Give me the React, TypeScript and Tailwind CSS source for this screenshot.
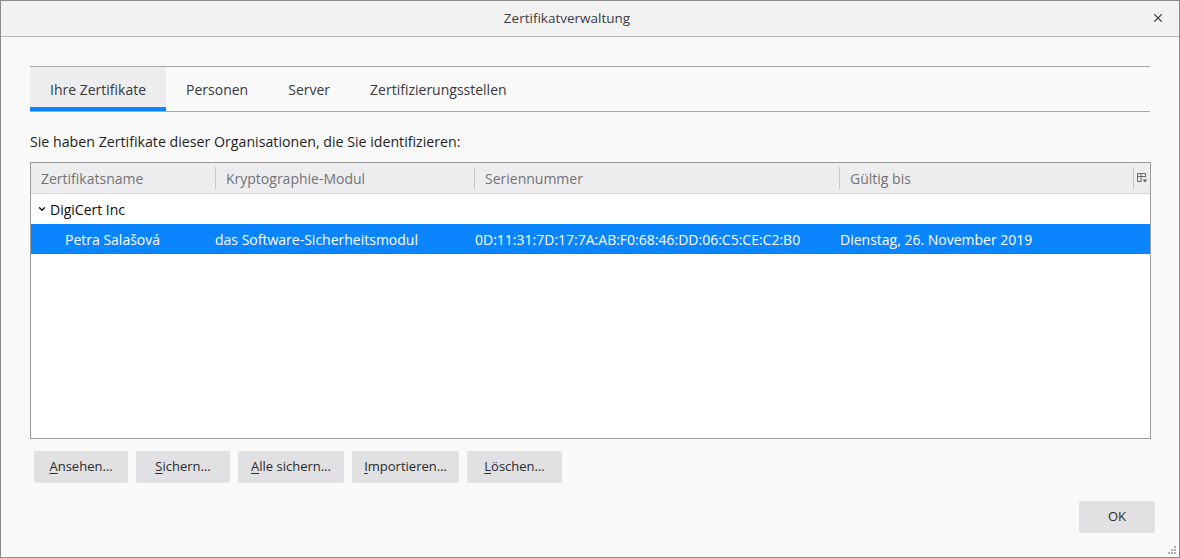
import { ChevronDown, X } from "lucide-react";

const tabs = ["Ihre Zertifikate", "Personen", "Server", "Zertifizierungsstellen"];

const columns = [
  { label: "Zertifikatsname", w: "w-[184px]" },
  { label: "Kryptographie-Modul", w: "w-[259px]" },
  { label: "Seriennummer", w: "w-[365px]" },
  { label: "Gültig bis", w: "flex-1" },
];

const buttons = [
  { key: "A", rest: "nsehen…", w: "w-[94px]" },
  { key: "S", rest: "ichern…", w: "w-[94px]" },
  { key: "A", rest: "lle sichern…", w: "w-[106px]" },
  { key: "I", rest: "mportieren…", w: "w-[107px]" },
  { key: "L", rest: "öschen…", w: "w-[95px]" },
];

function ColumnPicker() {
  return (
    <svg width="12" height="12" viewBox="0 0 12 12" className="text-[#6a6a6f]">
      <path d="M1.5 1.5h8v4M1.5 1.5v8h4M1.5 4.5h8M5 1.5v8" fill="none" stroke="currentColor" strokeWidth="1" />
      <path d="M6.5 7.5h5l-2.5 3z" fill="currentColor" />
    </svg>
  );
}

export default function App() {
  return (
    <div
      className="w-[1180px] h-[558px] flex flex-col bg-[#f9f9fa] border border-[#8a8a8a] text-[#0c0c0d] overflow-hidden"
      style={{ fontFamily: '"Open Sans", "Noto Sans", sans-serif' }}
    >
      {/* Title bar */}
      <div className="relative h-[36px] shrink-0 flex items-center justify-center pr-[46px] bg-[#f2f2f2] border-b border-[#b5b5b5]">
        <span className="text-[13.5px] text-[#3b3b45]">Zertifikatverwaltung</span>
        <button className="absolute right-[14px] top-[10px] text-[#4a4a4f]">
          <X className="w-[14px] h-[14px]" strokeWidth={2} />
        </button>
      </div>

      <div className="flex-1 flex flex-col px-[29px] pt-[29px]">
        {/* Tabs */}
        <div className="flex h-[46px] border-t border-b border-[#a8a8a8] w-[1120px]">
          {tabs.map((t, i) => (
            <div
              key={t}
              className={`flex items-center px-[20px] text-[14px] text-[#38383d] ${
                i === 0 ? "bg-[#ededf0] border-b-[4px] border-[#0a84ff] pt-[4px]" : ""
              }`}
            >
              {t}
            </div>
          ))}
        </div>

        <p className="mt-[19px] text-[14.2px] leading-[22px] text-[#1f1f22]">
          Sie haben Zertifikate dieser Organisationen, die Sie identifizieren:
        </p>

        {/* Tree */}
        <div className="mt-[9px] w-[1121px] h-[277px] border border-[#9b9b9b] bg-white flex flex-col">
          <div className="h-[31px] flex items-center bg-[#ededf0] border-b border-[#d7d7db] text-[14px] text-[#737373]">
            {columns.map((c, i) => (
              <div key={c.label} className={`${c.w} h-full flex items-center`}>
                {i > 0 && <span className="h-[22px] w-px bg-[#c8c8cc] mr-[10px]" />}
                <span className={i === 0 ? "pl-[10px]" : ""}>{c.label}</span>
              </div>
            ))}
            <div className="h-full flex items-center gap-[2px] pr-[2px]">
              <span className="h-[22px] w-px bg-[#c8c8cc]" />
              <ColumnPicker />
            </div>
          </div>
          <div className="h-[30px] flex items-center text-[14px] text-[#0c0c0d]">
            <ChevronDown className="w-[10px] h-[10px] ml-[6px] mr-[3px]" strokeWidth={3} />
            DigiCert Inc
          </div>
          <div className="h-[30px] flex items-center bg-[#0a84ff] text-white text-[14px]">
            <span className="w-[184px] pl-[34px]">Petra Salašová</span>
            <span className="w-[260px]">das Software-Sicherheitsmodul</span>
            <span className="w-[365px]">0D:11:31:7D:17:7A:AB:F0:68:46:DD:06:C5:CE:C2:B0</span>
            <span>Dienstag, 26. November 2019</span>
          </div>
        </div>

        {/* Buttons */}
        <div className="mt-[12px] ml-[4px] flex gap-[8px]">
          {buttons.map((b, i) => (
            <button
              key={i}
              className={`${b.w} h-[32px] rounded-[2px] bg-[#e1e1e3] text-[13px] text-[#2a2a2e]`}
            >
              <span className="underline underline-offset-2">{b.key}</span>
              {b.rest}
            </button>
          ))}
        </div>

        <div className="mt-[18px] flex justify-end">
          <button className="w-[76px] h-[32px] mr-[-5px] rounded-[2px] bg-[#e1e1e3] text-[13px] text-[#2a2a2e]">
            OK
          </button>
        </div>
      </div>

      {/* resize grip */}
      <div className="relative h-0">
        <div className="absolute right-[3px] bottom-[3px] grid grid-cols-3 gap-[1px] w-[8px]">
          <span />
          <span />
          <span className="w-[2px] h-[2px] bg-[#b0b0b0]" />
          <span />
          <span className="w-[2px] h-[2px] bg-[#b0b0b0]" />
          <span className="w-[2px] h-[2px] bg-[#b0b0b0]" />
          <span className="w-[2px] h-[2px] bg-[#b0b0b0]" />
          <span className="w-[2px] h-[2px] bg-[#b0b0b0]" />
          <span className="w-[2px] h-[2px] bg-[#b0b0b0]" />
        </div>
      </div>
    </div>
  );
}
